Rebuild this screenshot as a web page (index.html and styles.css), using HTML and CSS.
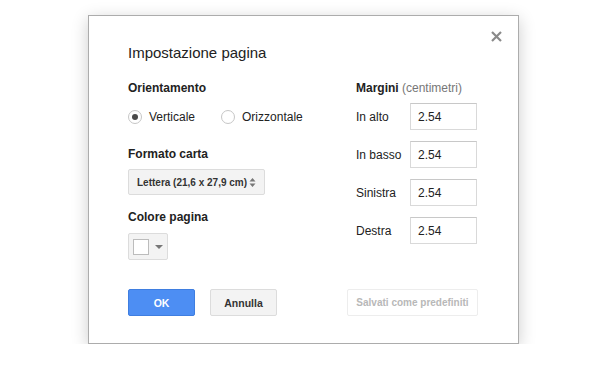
FILE: index.html
```html
<!DOCTYPE html>
<html lang="it">
<head>
<meta charset="utf-8">
<title>Impostazione pagina</title>
<link rel="stylesheet" href="styles.css">
</head>
<body>
<div class="dialog">
  <button class="close" aria-label="Chiudi">
    <svg width="11" height="11" viewBox="0 0 11 11"><path d="M1 1L10 10M10 1L1 10" stroke="#8a8a8a" stroke-width="2.2" fill="none"/></svg>
  </button>
  <div class="title">Impostazione pagina</div>
  <div class="cols">
    <div class="left">
      <div class="heading">Orientamento</div>
      <div class="radios">
        <label class="radio"><span class="circle checked"></span>Verticale</label>
        <label class="radio"><span class="circle"></span>Orizzontale</label>
      </div>
      <div class="heading h-paper">Formato carta</div>
      <div class="select"><span>Lettera (21,6 x 27,9 cm)</span>
        <svg class="updown" width="7" height="11" viewBox="0 0 7 11"><path d="M0.5 4.5L3.5 1L6.5 4.5Z M0.5 6.5L3.5 10L6.5 6.5Z" fill="#777"/></svg>
      </div>
      <div class="heading h-color">Colore pagina</div>
      <div class="colorbtn"><span class="swatch"></span><span class="caret"></span></div>
    </div>
    <div class="right">
      <div class="heading">Margini <span class="unit">(centimetri)</span></div>
      <div class="margins">
        <div class="mrow"><span class="mlabel">In alto</span><span class="input">2.54</span></div>
        <div class="mrow"><span class="mlabel">In basso</span><span class="input">2.54</span></div>
        <div class="mrow"><span class="mlabel">Sinistra</span><span class="input">2.54</span></div>
        <div class="mrow"><span class="mlabel">Destra</span><span class="input">2.54</span></div>
      </div>
    </div>
  </div>
  <div class="actions">
    <button class="btn primary">OK</button>
    <button class="btn">Annulla</button>
    <button class="btn disabled">Salvati come predefiniti</button>
  </div>
</div>
</body>
</html>
```
FILE: styles.css
```css
* { box-sizing: border-box; }
html, body { margin: 0; padding: 0; background: #fff; }
body {
  font-family: Arial, "Liberation Sans", sans-serif;
  color: #222;
  font-size: 12px;
}
.dialog {
  position: relative;
  margin: 15px 0 0 88px;
  width: 431px;
  height: 329px;
  border: 1px solid #acacac;
  background: #fff;
  padding: 27px 39px 0 39px;
  box-shadow: 0 4px 16px rgba(0,0,0,0.2);
}
.close {
  position: absolute;
  top: 15px;
  right: 16px;
  width: 11px;
  height: 11px;
  padding: 0;
  border: 0;
  background: none;
  display: block;
}
.close svg { display: block; }
.title {
  font-size: 15px;
  line-height: 20px;
  color: #222;
  margin-bottom: 17px;
}
.cols { display: flex; }
.left { width: 228px; display: flex; flex-direction: column; align-items: flex-start; }
.right { display: flex; flex-direction: column; }
.heading {
  font-weight: bold;
  font-size: 12px;
  line-height: 16px;
}
.unit { font-weight: normal; color: #777; }
.radios {
  display: flex;
  margin-top: 12px;
  height: 18px;
  align-items: center;
}
.radio {
  display: flex;
  align-items: center;
  font-size: 12px;
}
.radio + .radio { margin-left: 26px; }
.circle {
  width: 14px;
  height: 14px;
  border-radius: 50%;
  border: 1px solid #c6c6c6;
  background: #fff;
  margin-right: 7px;
  display: flex;
  align-items: center;
  justify-content: center;
}
.circle.checked::after {
  content: "";
  width: 6px;
  height: 6px;
  border-radius: 50%;
  background: #4a4a4a;
}
.h-paper { margin-top: 20px; }
.select {
  margin-top: 7px;
  width: 137px;
  height: 26px;
  background: #f3f3f3;
  border: 1px solid #dcdcdc;
  border-radius: 2px;
  font-size: 10px;
  font-weight: bold;
  color: #333;
  display: flex;
  align-items: center;
  justify-content: space-between;
  padding: 0 8px 0 8px;
  white-space: nowrap;
}
.updown { flex: none; }
.h-color { margin-top: 14px; }
.colorbtn {
  margin-top: 8px;
  width: 40px;
  height: 27px;
  background: #f3f3f3;
  border: 1px solid #dcdcdc;
  border-radius: 2px;
  display: flex;
  align-items: center;
  padding-left: 4px;
}
.swatch {
  width: 16px;
  height: 16px;
  background: #fff;
  border: 1px solid #bcbcbc;
}
.caret {
  margin-left: 6px;
  width: 0;
  height: 0;
  border-left: 4px solid transparent;
  border-right: 4px solid transparent;
  border-top: 4px solid #777;
}
.margins {
  margin-top: 7px;
  display: flex;
  flex-direction: column;
  gap: 11px;
}
.mrow { display: flex; align-items: center; }
.mlabel { width: 54px; font-size: 12px; }
.input {
  width: 67px;
  height: 27px;
  border: 1px solid #d9d9d9;
  border-top-color: #c8c8c8;
  font-size: 12px;
  padding-left: 7px;
  display: flex;
  align-items: center;
}
.actions {
  display: flex;
  margin-top: 29px;
}
.btn {
  height: 27px;
  border-radius: 2px;
  border: 1px solid #dcdcdc;
  background: #f3f3f3;
  font-family: Arial, "Liberation Sans", sans-serif;
  font-size: 10.5px;
  font-weight: bold;
  color: #333;
  padding: 0;
  width: 67px;
}
.btn + .btn { margin-left: 15px; }
.btn.primary {
  background: #4d8ef3;
  border-color: #3f7ee0;
  color: #fff;
}
.btn.disabled {
  margin-left: auto;
  margin-right: 1px;
  width: 131px;
  font-size: 10px;
  background: #fff;
  border-color: #ededed;
  color: #b8b8b8;
}
```
